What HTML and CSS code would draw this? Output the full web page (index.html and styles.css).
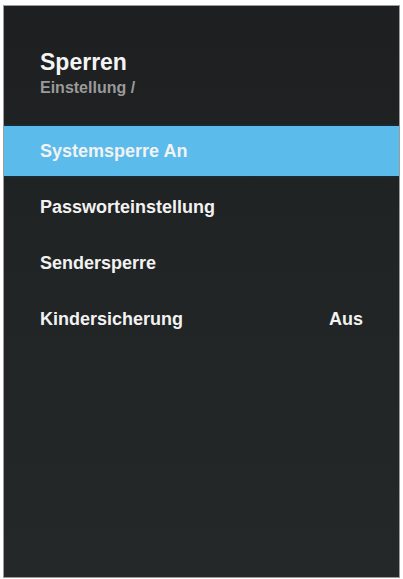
FILE: index.html
```html
<!DOCTYPE html>
<html lang="de">
<head>
<meta charset="utf-8">
<title>Sperren</title>
<link rel="stylesheet" href="styles.css">
</head>
<body>
<div class="panel">
  <header class="header">
    <div class="title">Sperren</div>
    <div class="crumb">Einstellung /</div>
  </header>
  <ul class="menu">
    <li class="item active"><span>Systemsperre An</span></li>
    <li class="item"><span>Passworteinstellung</span></li>
    <li class="item"><span>Sendersperre</span></li>
    <li class="item"><span>Kindersicherung</span><span class="value">Aus</span></li>
  </ul>
</div>
</body>
</html>
```

FILE: styles.css
```css
html, body {
  margin: 0;
  padding: 0;
  background: #ffffff;
}
body {
  font-family: "Liberation Sans", Arial, sans-serif;
  width: 403px;
  height: 579px;
  overflow: hidden;
}
.panel {
  box-sizing: border-box;
  margin: 5px 0 0 3px;
  width: 397px;
  height: 573px;
  border: 1px solid #9c9c9c;
  background: linear-gradient(180deg, #1d1f20 0%, #212425 40%, #242828 100%);
  display: flex;
  flex-direction: column;
}
.header {
  padding: 43px 36px 0 36px;
}
.title {
  font-size: 23px;
  line-height: 26px;
  font-weight: bold;
  color: #f4f4f4;
}
.crumb {
  margin-top: 4px;
  font-size: 16px;
  line-height: 18px;
  font-weight: bold;
  color: #9a9a9a;
}
.menu {
  list-style: none;
  margin: 29px 0 0 0;
  padding: 0;
  display: flex;
  flex-direction: column;
  gap: 6px;
}
.item {
  height: 50px;
  display: flex;
  align-items: center;
  justify-content: space-between;
  padding: 0 36px;
  font-size: 18px;
  font-weight: bold;
  color: #f2f2f2;
}
.item.active {
  background: #5bbbeb;
  box-shadow: 0 -2px 0 #1b2a32, 0 2px 0 #1b2a32;
}
.value {
  color: #f2f2f2;
}
```
